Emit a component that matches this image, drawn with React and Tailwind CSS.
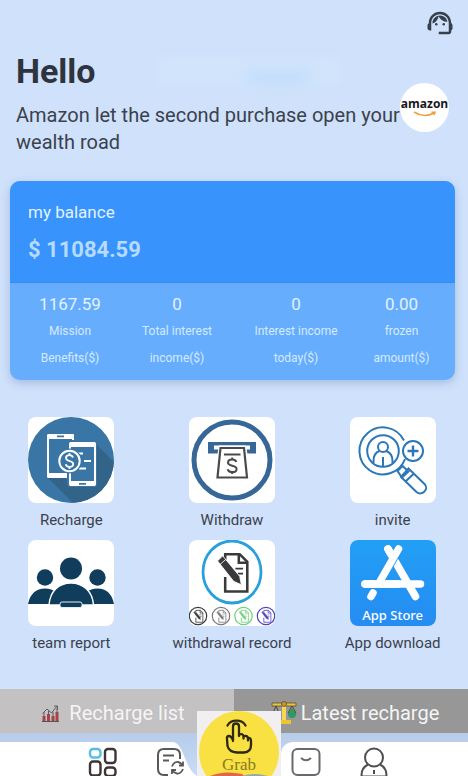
import { MdSupportAgent } from "react-icons/md";

const STATS = [
  { value: "1167.59", lines: ["Mission", "Benefits($)"] },
  { value: "0", lines: ["Total interest", "income($)"] },
  { value: "0", lines: ["Interest income", "today($)"] },
  { value: "0.00", lines: ["frozen", "amount($)"] },
];

function RechargeArt() {
  return (
    <svg viewBox="0 0 86 86" className="size-full" aria-hidden="true">
      <defs>
        <clipPath id="disc">
          <circle cx="43" cy="43" r="43" />
        </clipPath>
      </defs>
      <circle cx="43" cy="43" r="43" fill="#3a76a5" />
      <path d="M20 61 L50 91 H90 V49 L67 26 V69 H42 L38 61Z" fill="#326489" clipPath="url(#disc)" />
      <rect x="20" y="18" width="25" height="42" rx="2" fill="#3a76a5" stroke="#fff" strokeWidth="2" />
      <path d="M21 17h24q1 0 1 1v4H19v-4q0-1 2-1zM19 56h27v4q0 1-1 1H21q-2 0-2-1z" fill="#fff" />
      <path d="M29 19.300h7" stroke="#3a76a5" strokeWidth="1.800" />
      <rect x="39" y="23" width="30" height="47" rx="3" fill="#3a76a5" />
      <rect x="42" y="26" width="25" height="42" rx="2" fill="#3a76a5" stroke="#fff" strokeWidth="2" />
      <path d="M43 25h23q2 0 2 2v3H41v-3q0-2 2-2zM41 64h27v3q0 2-2 2H43q-2 0-2-2z" fill="#fff" />
      <path d="M51 66.800h7" stroke="#3a76a5" strokeWidth="1.800" />
      <path d="M50 36.500h5M56 44h7M51 51.500h7" stroke="#fff" strokeWidth="2" />
      <circle cx="41.500" cy="44" r="12.500" fill="#3a76a5" />
      <circle cx="41.500" cy="44" r="10.200" fill="#3a76a5" stroke="#fff" strokeWidth="2" />
      <path d="M45 40.500c-.6-1.800-2-2.300-3.500-2.300-2 0-3.500 1-3.500 2.800 0 4 7.200 2 7.200 6 0 1.900-1.600 2.900-3.700 2.900-1.900 0-3.300-.8-3.800-2.600M41.500 36v2M41.500 50v2" fill="none" stroke="#fff" strokeWidth="1.800" />
    </svg>
  );
}

function WithdrawArt() {
  return (
    <svg viewBox="0 0 86 86" className="size-full" aria-hidden="true" fill="none">
      <circle cx="43" cy="43" r="38" stroke="#376797" strokeWidth="5" />
      <path d="M19 25h48v11.500H19z" fill="#376797" />
      <path d="M25 28.500h36v4H25z" fill="#fff" />
      <path d="M30 28.500h27L58.500 37h-30z" fill="#fff" />
      <path d="M31.500 31h23.500l3 29.500H28.500z" fill="#fff" stroke="#4a4a4d" strokeWidth="2.200" />
      <path d="M35 37.500h16.500" stroke="#4a4a4d" strokeWidth="1.800" />
      <path d="M47.300 45c-.5-1.700-2-2.600-4.100-2.600-2.400 0-4.200 1.200-4.200 3.100 0 4.400 8.600 2 8.600 6.400 0 2-1.900 3.200-4.400 3.200-2.300 0-4.100-.9-4.500-2.900M43.200 40.500v2M43.200 55v2" stroke="#4a4a4d" strokeWidth="2" />
    </svg>
  );
}

function InviteArt() {
  return (
    <svg viewBox="0 0 86 86" className="size-full" aria-hidden="true" fill="none" stroke="#2c77b8" strokeWidth="2">
      <path d="M54 23.500A23.500 23.500 0 1 0 55 42" />
      <circle cx="33" cy="34" r="15.800" />
      <circle cx="33" cy="30" r="5" />
      <path d="M23.500 46v-2c0-6 3-9 6-10M36 34c3 1 6.500 4 6.500 10v2M33 40v9.500" />
      <circle cx="63" cy="34" r="10" fill="#fff" />
      <path d="M63 28.500v11M57.500 34h11" strokeWidth="2.400" />
      <path d="M47.500 54l5-5 6 5.500-6.500 6z" />
      <path d="M51 60l7.500-8.500 16 15.500c5 5-2.500 12.500-8 8z" />
      <path d="M55.500 64.500l8-7.500" />
    </svg>
  );
}

function TeamArt() {
  return (
    <svg viewBox="0 0 86 86" className="size-full" aria-hidden="true" fill="#0f3d5b">
      <circle cx="17" cy="37.500" r="8.200" />
      <circle cx="69.500" cy="37.500" r="8.200" />
      <circle cx="43" cy="28.500" r="11" />
      <path d="M0 64c2-10 8-15.500 17-15.500S32 54 34 64z" />
      <path d="M52 64c2-10 8.500-15.500 17.500-15.500S84 54 86 64z" />
      <path d="M21 65c1-14 10-22 22-22s21.500 8 22.500 22z" stroke="#fff" strokeWidth="1.400" />
      <rect x="32" y="62" width="22" height="5.500" rx="2" stroke="#e3edf4" strokeWidth="1" />
    </svg>
  );
}

function NoteAndPencil({ color }) {
  return (
    <g fill="none" stroke={color}>
      <path d="M-8-14V-21H9L18-12V23H-8V6" strokeWidth="3" />
      <path d="M8-21v10h10" strokeWidth="3" />
      <path d="M4-4h9M7 2h6" strokeWidth="2" />
      <path d="M-17-13L-11-19 9 5 11 15 2 11Z" fill={color} stroke="#fff" strokeWidth="1" />
      <path d="M-14-9l7-6" stroke="#fff" strokeWidth="1" />
    </g>
  );
}

function RecordArt() {
  const small = [
    [9, "#3c3c3e"],
    [32, "#7a7a7c"],
    [54.5, "#6fd07c"],
    [77, "#5144b8"],
  ];
  return (
    <svg viewBox="0 0 86 86" className="size-full" aria-hidden="true" fill="none">
      <ellipse cx="43" cy="32" rx="29" ry="31" stroke="#27a0dc" strokeWidth="2.800" />
      <g transform="translate(43 32) scale(.85)">
        <NoteAndPencil color="#3a3a3c" />
      </g>
      {small.map(([x, color]) => (
        <g key={x} transform={`translate(${x} 76)`}>
          <circle r="8.700" stroke={color} strokeWidth="1.200" />
          <g transform="scale(.27)">
            <NoteAndPencil color={color} />
          </g>
        </g>
      ))}
    </svg>
  );
}

function StoreArt() {
  return (
    <div className="relative size-full bg-linear-to-b from-[#229ff5] to-[#258cf2]">
      <svg viewBox="0 0 86 86" className="size-full" aria-hidden="true" fill="none" stroke="#fff" strokeWidth="7.500" strokeLinecap="round">
        <path d="M38 9L65.500 56.500M15 44H70.500M23 53L21 56.500" />
        <path d="M48.500 9L29 43" stroke="#2397f3" strokeWidth="9" strokeLinecap="butt" />
        <path d="M38 9L43 17.600M48.500 9L29 43M15 44H48" />
      </svg>
      <span className="absolute inset-x-0 bottom-0 text-center font-['Noto_Sans',sans-serif] text-[13px] leading-[22px] font-medium text-white">
        App Store
      </span>
    </div>
  );
}

const ACTIONS = [
  ["Recharge", RechargeArt],
  ["Withdraw", WithdrawArt],
  ["invite", InviteArt],
  ["team report", TeamArt],
  ["withdrawal record", RecordArt],
  ["App download", StoreArt],
];

function BarsIcon() {
  return (
    <svg viewBox="0 0 18 18" className="size-[18px]" aria-hidden="true" fill="none">
      <path d="M1 17.500h17" stroke="#555" />
      <path d="M3 17v-5M7.500 17v-7M12 17v-5M16 17V8" stroke="#a5434b" strokeWidth="3" />
      <path d="M1.500 9.500L6 5l4.500 4L16 2M13 2h3.500v3.500M3 12V8M7.500 10V7M12 12V8M16 8V4" stroke="#59605e" />
    </svg>
  );
}

function ScalesIcon() {
  return (
    <svg viewBox="0 0 26 24" className="h-6 w-[26px]" aria-hidden="true">
      <path d="M1 2h24v3H1z" fill="#ebc53d" stroke="#5b5130" strokeWidth=".8" />
      <path d="M11 4h4v15h-4z" fill="#f3d857" />
      <path d="M6 19h14v4H6z" fill="#efc52d" />
      <circle cx="13" cy="3" r="2.500" fill="#c8962c" stroke="#5b5130" strokeWidth=".8" />
      <path d="M5 5L2 12h6zM21 5l-4 7h8z" fill="none" stroke="#4c4a3d" />
      <path d="M1 12h8q-1 4-4 4t-4-4z" fill="#d9ae32" />
      <path d="M21 7l4 6q0 4-4 4t-4-4z" fill="#2d9a61" />
    </svg>
  );
}

function HomeIcon() {
  return (
    <svg viewBox="0 0 30 32" className="h-8 w-[30px]" aria-hidden="true" fill="none" stroke="#3c3536" strokeWidth="2.400">
      <rect x="2" y="2" width="10.500" height="8.500" rx="3.200" stroke="#55bfe3" />
      <rect x="17" y="2" width="10.500" height="14" rx="3" />
      <rect x="2" y="14.500" width="10.500" height="14" rx="3" />
      <rect x="17" y="20.500" width="10.500" height="8.500" rx="3.200" />
    </svg>
  );
}

function RecordsIcon() {
  return (
    <svg viewBox="0 0 30 32" className="h-8 w-[30px]" aria-hidden="true" fill="none" stroke="#58585a" strokeWidth="2">
      <path d="M25 12V8q0-6-6-6H9Q3 2 3 8v14q0 6 6 6h4" />
      <path d="M8 8.500h11M8 13.500h6" />
      <path d="M17 19.500q2-5 6-4.500 3 .5 4.500 3.500M28 14.500V18.500h-4M28 22q-2 5-6 4.500-3-.5-4.500-3M17 27v-4h4" strokeWidth="1.800" />
    </svg>
  );
}

function BagIcon() {
  return (
    <svg viewBox="0 0 30 32" className="h-8 w-[30px]" aria-hidden="true" fill="none" stroke="#69696b" strokeWidth="2">
      <rect x="1.500" y="2" width="27" height="26" rx="5" />
      <path d="M10 11q5 4.500 10 0" />
    </svg>
  );
}

function PersonIcon() {
  return (
    <svg viewBox="0 0 30 32" className="h-8 w-[30px]" aria-hidden="true" fill="none" stroke="#4f4f51" strokeWidth="2">
      <circle cx="15" cy="10.500" r="9" />
      <path d="M9 17.500Q2.500 21 2.500 28q0 1.500 2 1.500h21q2 0 2-1.500 0-7-6.500-10.500M15 23v4" />
    </svg>
  );
}

function TapArt() {
  return (
    <svg viewBox="0 0 84 65" className="size-full" aria-hidden="true">
      <ellipse cx="42" cy="41" rx="40" ry="41" fill="#f9e043" />
      <path d="M13 65q14-6 32-2l2 2z" fill="#e2664a" />
      <path d="M45 65q12-4 26 0z" fill="#8fa9b0" />
      <g fill="none" stroke="#2d2812" strokeWidth="2.300" strokeLinecap="round" strokeLinejoin="round">
        <path d="M30.500 14.500a10 8.500 0 0 1 18 0" />
        <path d="M36 30V15.500q0-3 3-3t3 3V25M42 23.500q4-1.500 4.500 2v2M46.500 25q4-1 4.500 2.500v2M51 27q3-.5 3 3v4q0 7-7 7.500h-7q-8-.5-9.500-6.500l-.5-7q-.5-3 2-3 2 0 4 4" />
      </g>
    </svg>
  );
}

export default function App() {
  return (
    <div className="flex h-screen flex-col overflow-hidden bg-[#cfe1fb] font-[Roboto,sans-serif] text-[#3b424d]">
      <header className="pt-2 pr-[13px]">
        <button type="button" aria-label="Customer service" className="ml-auto block text-[#36404d]">
          <MdSupportAgent className="size-[30px]" />
        </button>
      </header>

      <section className="flex items-center justify-between pt-3 pr-[19px] pl-4">
        <div className="flex-1">
          <div className="flex items-center">
            <h1 className="text-[34px] leading-[42px] font-bold text-[#2d343d]">Hello</h1>
            <div className="ml-[60px] flex h-8 w-[186px] items-end justify-end bg-[#d3e7fd]/50 pr-8 pb-1 blur-[4px]">
              <div className="h-3 w-16 rounded-full bg-[#b9dafb]/70 blur-[4px]" />
            </div>
          </div>
          <p className="mt-[10px] text-[20px] leading-[27px]">
            Amazon let the second purchase open your wealth road
          </p>
        </div>
        <div className="mt-2 flex size-[49px] flex-col items-center rounded-full bg-white pt-[13px]">
          <span className="font-['Open_Sans',sans-serif] text-[12px] leading-4 font-bold text-[#18181a]">amazon</span>
          <svg viewBox="0 0 24 6" className="-mt-px h-[6px] w-6" aria-hidden="true" fill="none" stroke="#f0a03c" strokeWidth="1.600">
            <path d="M1 1Q11 7.500 21 2M18.500 1.200h3.500L21 4" />
          </svg>
        </div>
      </section>

      <section className="mt-[25px] mr-[13px] ml-[10px] shrink-0 overflow-hidden rounded-[10px] bg-[#67adfd] text-[#e2f2ff] shadow-[0_3px_8px_rgba(90,120,170,0.35)]">
        <div className="h-[102px] border-b border-[#3a8beb] bg-[#3893fc] px-[18px] pt-[19px]">
          <h2 className="text-[17px] leading-6">my balance</h2>
          <p className="mt-[13px] text-[22px] leading-[26px] font-bold text-[#b5dbff]">$ 11084.59</p>
        </div>
        <dl className="grid grid-cols-[80fr_134fr_104fr_107fr] pt-2 pb-2 pl-5 text-center">
          {STATS.map(({ value, lines }) => (
            <div key={lines[0]} className="flex flex-col-reverse">
              <dt className="text-[12px] leading-[27px] text-[#d3ebff]">
                {lines.map((line) => (
                  <span key={line} className="block">{line}</span>
                ))}
              </dt>
              <dd className="text-[17px] leading-[27px]">{value}</dd>
            </div>
          ))}
        </dl>
      </section>

      <section className="mt-[37px] grid shrink-0 grid-cols-3 gap-x-[42px] gap-y-2 pr-4 pl-3">
        {ACTIONS.map(([label, Art]) => (
          <button key={label} type="button" className="flex flex-col items-center">
            <span className="block size-[86px] overflow-hidden rounded-lg bg-white">
              <Art />
            </span>
            <span className="mt-[5px] text-[15px] leading-6 whitespace-nowrap">{label}</span>
          </button>
        ))}
      </section>

      <div className="mt-[34px] grid shrink-0 grid-cols-2 text-[20px] leading-6 text-[#f5f5f5]">
        <button type="button" className="flex h-[44px] items-center justify-center gap-[10px] bg-[#c3c1c2] pt-1 pr-2">
          <BarsIcon />
          Recharge list
        </button>
        <button type="button" className="flex h-[44px] items-center justify-center gap-1 bg-[#979797] pt-1 pl-2">
          <ScalesIcon />
          Latest recharge
        </button>
      </div>

      <nav className="grid min-h-0 flex-1 grid-cols-[173fr_24px_84px_187fr] bg-linear-to-b from-[#b7cce9] to-[#c9dcf8] pt-[9px]">
        <div className="z-10 flex items-start justify-end gap-[37px] bg-white pt-[5px]">
          <button type="button" aria-label="Home">
            <HomeIcon />
          </button>
          <button type="button" aria-label="Records" className="-mr-3">
            <RecordsIcon />
          </button>
        </div>
        <svg viewBox="0 0 24 34" className="h-[34px] w-6" aria-hidden="true">
          <path d="M0 0C11 1 11 26 24 34H0z" fill="#fff" />
        </svg>
        <button type="button" className="relative -mt-[31px] h-[65px] w-[84px] bg-[#f1eff0]">
          <TapArt />
          <span className="absolute inset-x-0 bottom-0 text-center font-['Liberation_Serif',serif] text-[17px] leading-[22px] text-[#8a7a22]">
            Grab
          </span>
        </button>
        <div className="flex items-start gap-[38px] rounded-tl-[12px] bg-white pt-[5px] pl-[10px]">
          <button type="button" aria-label="Orders">
            <BagIcon />
          </button>
          <button type="button" aria-label="Account">
            <PersonIcon />
          </button>
        </div>
      </nav>
    </div>
  );
}
